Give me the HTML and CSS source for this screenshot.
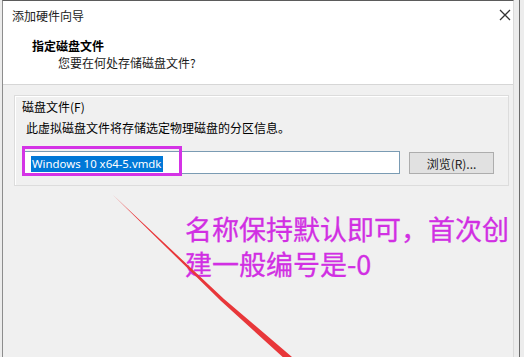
FILE: index.html
```html
<!DOCTYPE html>
<html lang="zh-CN">
<head>
    <meta charset="UTF-8">
    <title>添加硬件向导</title>
    <link rel="stylesheet" href="styles.css">
</head>
<body>
    <div class="window">
        <div class="header">
            <div class="titlebar">
                <span class="title">添加硬件向导</span>
                <svg class="close" width="12" height="12" viewBox="0 0 12 12">
                    <path d="M1 1 L11 11 M11 1 L1 11" stroke="#333" stroke-width="1.3" fill="none"/>
                </svg>
            </div>
            <div class="heading">指定磁盘文件</div>
            <div class="subheading">您要在何处存储磁盘文件?</div>
        </div>

        <div class="content">
            <div class="group">
                <div class="group-label">磁盘文件(F)</div>
                <div class="group-desc">此虚拟磁盘文件将存储选定物理磁盘的分区信息。</div>
                <div class="file-row">
                    <div class="file-input"><span class="selected">Windows 10 x64-5.vmdk</span></div>
                    <button class="browse">浏览(R)...</button>
                </div>
            </div>
        </div>

        <!-- annotations drawn over the screenshot -->
        <div class="mark-box"></div>
        <div class="mark-text">名称保持默认即可，首次创<br>建一般编号是-0</div>
        <svg class="mark-arrow" width="524" height="357" viewBox="0 0 524 357">
            <path d="M113 195 L224 299 L292 357 L286 360 L221 301 Z" fill="#e8373a"/>
        </svg>
    </div>
    <div class="side-edge"></div>
</body>
</html>
```

FILE: styles.css
```css
body {
    margin: 0;
    background-color: #ececec;
    font-family: "Noto Sans CJK SC", "Microsoft YaHei", sans-serif;
    font-size: 12px;
    color: #000;
    overflow: hidden;
}

.window {
    position: relative;
    margin-left: 2px;
    width: 510px;
    height: 356px;
    border-top: 1px solid #5b5b5b;
    border-left: 1px solid #8d8d8d;
    border-right: 1px solid #dadada;
    background-color: #f0f0f0;
}

.side-edge {
    position: absolute;
    top: 0;
    left: 519px;
    width: 1px;
    height: 357px;
    background-color: #6a6a6a;
}

.header {
    height: 83px;
    background-color: #fff;
    border-bottom: 1px solid #d6d6d6;
}

.titlebar {
    display: flex;
    justify-content: space-between;
    align-items: center;
    height: 28px;
    padding-left: 9px;
    padding-right: 2px;
}

.title {
    color: #222;
}

.close {
    margin-top: -1px;
}

.heading {
    margin-top: 9px;
    padding-left: 29px;
    line-height: 16px;
    font-weight: bold;
}

.subheading {
    margin-top: 1px;
    padding-left: 55px;
    line-height: 16px;
    color: #1a1a1a;
}

.content {
    padding: 10px 0 0 11px;
}

.group {
    width: 479px;
    padding: 4px 7px 11px 7px;
    border: 1px solid #dcdcdc;
    box-shadow: inset 1px 1px 0 #fff;
}

.group-label {
    line-height: 14px;
}

.group-desc {
    margin-top: 7px;
    margin-left: 4px;
    line-height: 14px;
}

.file-row {
    display: flex;
    align-items: flex-start;
    margin-top: 16px;
    margin-left: 2px;
}

.file-input {
    box-sizing: border-box;
    width: 376px;
    height: 23px;
    padding: 2px 0 0 6px;
    background-color: #fff;
    border: 1px solid #7a9bb3;
}

.selected {
    display: inline-block;
    padding: 0 2px 0 1px;
    line-height: 16px;
    background-color: #0078d7;
    color: #fff;
    font-family: "Noto Sans", "Open Sans", sans-serif;
    font-size: 11.4px;
}

.browse {
    box-sizing: border-box;
    margin: 1px 0 0 9px;
    width: 85px;
    height: 22px;
    padding: 0;
    background-color: #e1e1e1;
    border: 1px solid #adadad;
    font-family: "Noto Sans CJK SC", sans-serif;
    font-size: 12px;
    color: #222;
}

.mark-box {
    position: absolute;
    left: 19px;
    top: 145px;
    width: 154px;
    height: 24px;
    border: 3px solid #d433e6;
}

.mark-text {
    position: absolute;
    left: 182px;
    top: 210px;
    font-size: 27px;
    line-height: 35px;
    color: #d12fe3;
    white-space: nowrap;
    -webkit-text-stroke: 0.3px #d12fe3;
}

.mark-arrow {
    position: absolute;
    left: -3px;
    top: -1px;
    pointer-events: none;
}
```
